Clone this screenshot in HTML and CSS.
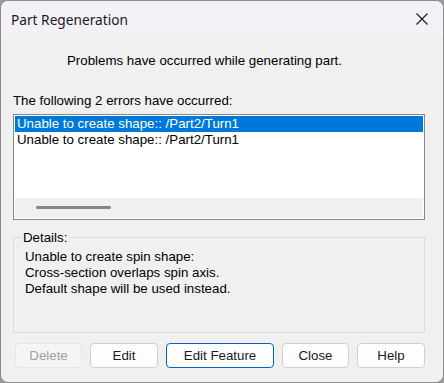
FILE: index.html
```html
<!DOCTYPE html>
<html>
<head>
<meta charset="utf-8">
<link rel="stylesheet" href="styles.css">
</head>
<body>
<div class="window">
  <div class="titlebar">
    <span class="title">Part Regeneration</span>
    <svg class="close" width="12" height="12" viewBox="0 0 12 12"><path d="M0.5 0.5 L11.5 11.5 M11.5 0.5 L0.5 11.5" stroke="#1a1a1a" stroke-width="1.1" fill="none"/></svg>
  </div>
  <div class="content">
    <div class="message">Problems have occurred while generating part.</div>
    <div class="label">The following 2 errors have occurred:</div>
    <div class="listbox">
      <div class="rows">
        <div class="row selected">Unable to create shape:: /Part2/Turn1</div>
        <div class="row">Unable to create shape:: /Part2/Turn1</div>
      </div>
      <div class="hscroll"><div class="thumb"></div></div>
    </div>
    <div class="details">
      <span class="legend">Details:</span>
      <div class="detail-text">Unable to create spin shape:<br>Cross-section overlaps spin axis.<br>Default shape will be used instead.</div>
    </div>
    <div class="buttons">
      <button class="btn disabled">Delete</button>
      <button class="btn edit">Edit</button>
      <button class="btn default wide">Edit Feature</button>
      <button class="btn">Close</button>
      <button class="btn help">Help</button>
    </div>
  </div>
</div>
</body>
</html>
```
FILE: styles.css
```css
html, body {
  margin: 0;
  padding: 0;
  background: #9a9a9a;
}
body {
  width: 444px;
  height: 383px;
  font-family: "Liberation Sans", Arial, sans-serif;
  font-size: 13.3px;
  color: #000;
}
.window {
  box-sizing: border-box;
  width: 444px;
  height: 383px;
  border: 1px solid #8c8c8c;
  border-radius: 8px;
  overflow: hidden;
  background: #f0f0f0;
  display: flex;
  flex-direction: column;
}
.titlebar {
  height: 36px;
  background: #f3f0f8;
  display: flex;
  align-items: center;
  justify-content: space-between;
  padding: 0 15px 0 10px;
  flex-shrink: 0;
}
.title {
  font-family: "Noto Sans", sans-serif;
  font-size: 13.7px;
  color: #1a1a1a;
  margin-top: 0;
}
.content {
  flex: 1;
  padding: 0 18px 0 12px;
  display: flex;
  flex-direction: column;
}
.message {
  padding-left: 54px;
  margin-top: 16px;
  line-height: 15px;
}
.label {
  margin-top: 25px;
  line-height: 15px;
}
.listbox {
  margin-top: 6px;
  height: 106px;
  box-sizing: border-box;
  border: 1px solid #828790;
  background: #fff;
  padding: 1px;
  display: flex;
  flex-direction: column;
  flex-shrink: 0;
}
.rows {
  flex: 1;
}
.row {
  height: 16px;
  line-height: 16px;
  padding-left: 2px;
  white-space: nowrap;
}
.row.selected {
  background: #0078d7;
  color: #fff;
}
.hscroll {
  height: 20px;
  background: #f0f0f0;
  position: relative;
}
.thumb {
  position: absolute;
  left: 21px;
  top: 8px;
  width: 75px;
  height: 3px;
  background: #858585;
  border-radius: 1.5px;
}
.details {
  margin-top: 17px;
  height: 96px;
  box-sizing: border-box;
  border: 1px solid #dcdcdc;
  padding: 0 10px 0 11px;
  flex-shrink: 0;
}
.legend {
  display: inline-block;
  margin: -8px 0 0 -3px;
  padding: 0 1px;
  background: #f0f0f0;
  line-height: 15px;
  vertical-align: top;
}
.detail-text {
  margin-top: -4px;
  line-height: 16px;
}
.buttons {
  margin-top: 10px;
  display: flex;
  gap: 8px;
  padding-left: 2px;
}
.btn {
  box-sizing: border-box;
  width: 67px;
  height: 25px;
  font-family: inherit;
  font-size: 13.3px;
  background: #fdfdfd;
  border: 1px solid #d0d0d0;
  border-radius: 4px;
  color: #1a1a1a;
  padding: 0;
}
.btn.edit, .btn.help {
  width: 68px;
}
.btn.wide {
  width: 108px;
}
.btn.default {
  border-color: #0067c0;
}
.btn.disabled {
  background: #f5f5f5;
  border-color: #e5e5e5;
  color: #a0a0a0;
}
```
